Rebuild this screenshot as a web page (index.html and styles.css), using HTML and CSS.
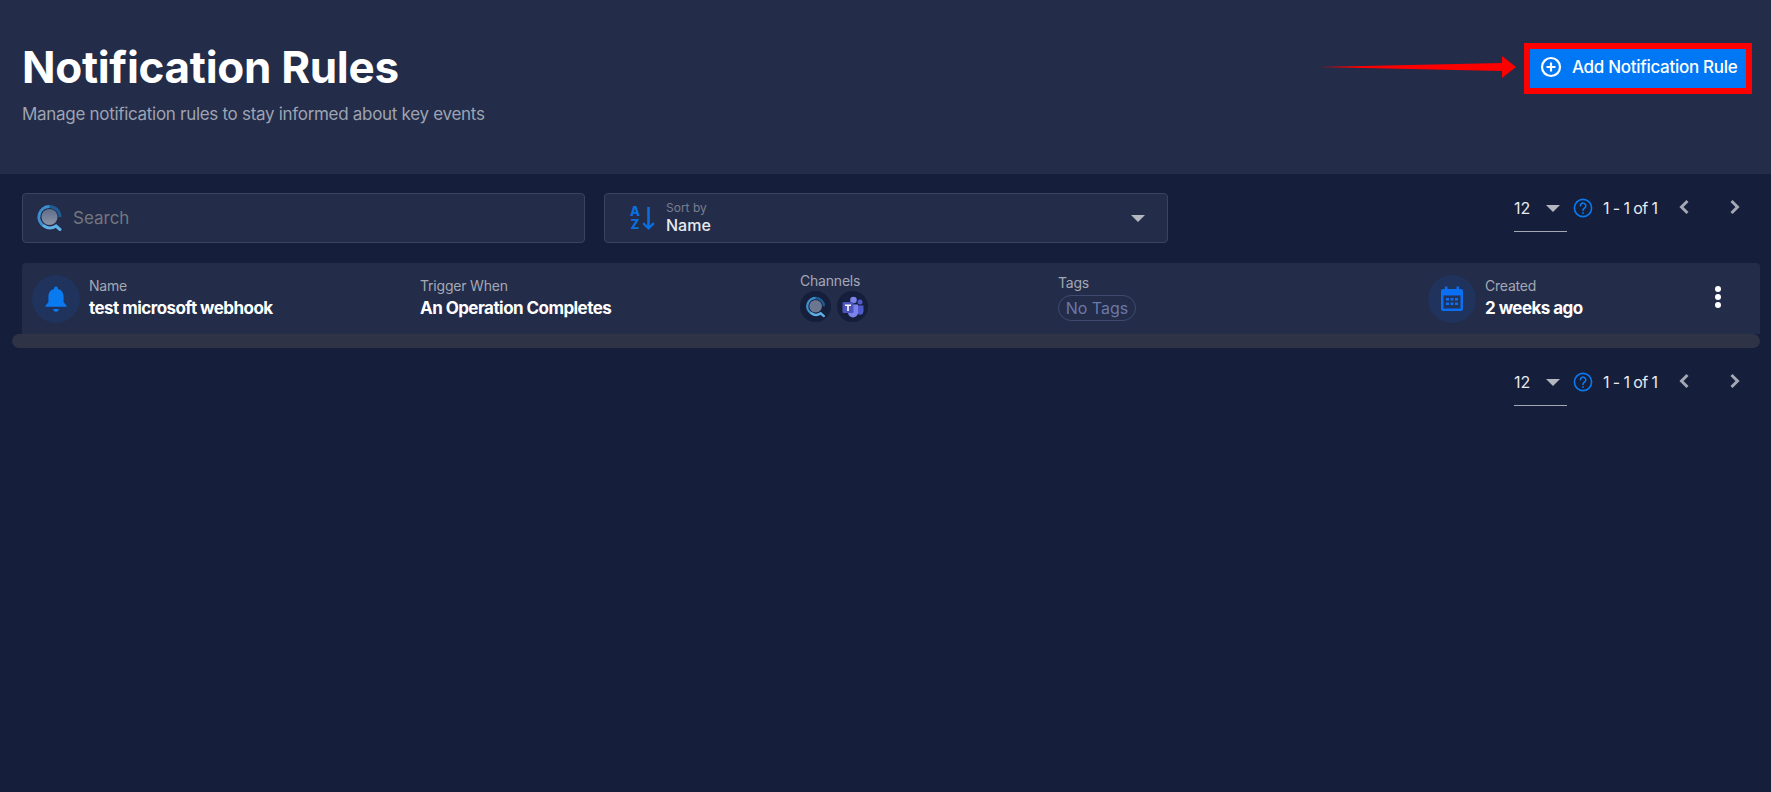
FILE: index.html
```html
<!DOCTYPE html>
<html lang="en">
<head>
    <meta charset="UTF-8">
    <meta name="viewport" content="width=device-width, initial-scale=1.0">
    <title>Notification Rules</title>
    <link rel="stylesheet" href="styles.css">
</head>
<body>
    <header class="page-header">
        <div class="page-heading">
            <h1>Notification Rules</h1>
            <p>Manage notification rules to stay informed about key events</p>
        </div>
        <div class="add-wrap">
            <svg class="red-arrow" width="200" height="26" viewBox="0 0 200 26">
                <path d="M0 13 L184 9 L184 2 L198 13 L184 24 L184 17 Z" fill="#ff0000"/>
            </svg>
            <button class="add-btn" type="button">
                <svg width="22" height="22" viewBox="0 0 22 22" fill="none" stroke="#fff" stroke-width="2.2">
                    <circle cx="11" cy="11" r="9"/>
                    <path d="M11 6.5v9M6.5 11h9"/>
                </svg>
                Add Notification Rule
            </button>
        </div>
    </header>

    <main class="content">
        <div class="toolbar">
            <div class="field search-field">
                <svg width="28" height="28" viewBox="0 0 28 28" fill="none">
                    <defs>
                        <linearGradient id="lens" x1="0" y1="0" x2="0" y2="1">
                            <stop offset="0" stop-color="#5f6d8a"/>
                            <stop offset="1" stop-color="#8b93a6"/>
                        </linearGradient>
                    </defs>
                    <circle cx="13.5" cy="13" r="8" fill="url(#lens)"/>
                    <path d="M24 13A10.5 10.5 0 0 0 13.5 2.5" stroke="#1f5c94" stroke-width="3"/>
                    <path d="M13.5 2.5A10.5 10.5 0 0 0 8 22" stroke="#3f8fce" stroke-width="3"/>
                    <path d="M8 22A10.5 10.5 0 0 0 20 22L24 25.5" stroke="#5fb0e6" stroke-width="3" stroke-linecap="round"/>
                </svg>
                <span class="placeholder">Search</span>
            </div>
            <div class="field sort-field">
                <div class="sort-icon">
                    <div class="sort-letters"><span>A</span><span>Z</span></div>
                    <svg width="13" height="25" viewBox="0 0 13 25" fill="#0a6fe0">
                        <path d="M5.2 1h2.6v18.5l3.2-3.2 1.6 1.6-6.1 6.1-6.1-6.1 1.6-1.6 3.2 3.2z"/>
                    </svg>
                </div>
                <div class="sort-text">
                    <span class="sort-label">Sort by</span>
                    <span class="sort-value">Name</span>
                </div>
                <span class="caret sort-caret"></span>
            </div>
            <div class="pager">
                <div class="page-size"><span>12</span><span class="caret"></span></div>
                <svg width="20" height="20" viewBox="0 0 20 20" fill="none" stroke="#0a7af0" stroke-width="1.6">
                    <circle cx="10" cy="10" r="8.6"/>
                    <path d="M7.4 7.8a2.7 2.7 0 1 1 4.2 2.2c-1 .7-1.6 1.2-1.6 2.4" stroke-linecap="round"/>
                    <circle cx="10" cy="15" r=".6" fill="#0a7af0" stroke-width=".8"/>
                </svg>
                <span class="page-count">1 - 1 of 1</span>
                <svg class="chevron prev" width="12" height="16" viewBox="0 0 12 16" fill="none" stroke="#a4a8b4" stroke-width="3"><path d="M9.5 2L3.5 8l6 6"/></svg>
                <svg class="chevron" width="12" height="16" viewBox="0 0 12 16" fill="none" stroke="#a4a8b4" stroke-width="3"><path d="M2.5 2l6 6-6 6"/></svg>
            </div>
        </div>

        <div class="table-scroll">
            <div class="rule-row">
                <div class="cell cell-name">
                    <span class="icon-oval">
                        <svg width="24" height="28" viewBox="0 0 24 26" fill="#0a7af0">
                            <path d="M12 .5a2 2 0 0 1 2 2v.6c3.6.9 5.6 3.9 5.6 7.6v5.6l3 3.4v1H1.4v-1l3-3.4v-5.6c0-3.7 2-6.7 5.6-7.6v-.6a2 2 0 0 1 2-2z"/>
                            <path d="M9.3 23h5.4a2.7 2.7 0 0 1-5.4 0z"/>
                        </svg>
                    </span>
                    <div class="stack">
                        <span class="label">Name</span>
                        <span class="value">test microsoft webhook</span>
                    </div>
                </div>
                <div class="cell cell-trigger">
                    <div class="stack">
                        <span class="label">Trigger When</span>
                        <span class="value">An Operation Completes</span>
                    </div>
                </div>
                <div class="cell cell-channels">
                    <div class="stack stack-tight">
                        <span class="label">Channels</span>
                        <div class="channels">
                            <span class="channel">
                                <svg width="22" height="22" viewBox="0 0 28 28" fill="none">
                                    <circle cx="13.5" cy="13" r="8" fill="#6b7690"/>
                                    <path d="M24 13A10.5 10.5 0 0 0 13.5 2.5" stroke="#1f5c94" stroke-width="3"/>
                                    <path d="M13.5 2.5A10.5 10.5 0 0 0 8 22" stroke="#3f8fce" stroke-width="3"/>
                                    <path d="M8 22A10.5 10.5 0 0 0 20 22L24 25.5" stroke="#5fb0e6" stroke-width="3" stroke-linecap="round"/>
                                </svg>
                            </span>
                            <span class="channel">
                                <svg width="24" height="24" viewBox="0 0 24 24">
                                    <circle cx="19" cy="7" r="2.5" fill="#5059c9"/>
                                    <path d="M16 10.5h6.5v6a3.5 3.5 0 0 1-6.5 1.5z" fill="#5059c9"/>
                                    <circle cx="12.5" cy="5" r="3.3" fill="#7b83eb"/>
                                    <path d="M7 9.5h10v8a5 5 0 0 1-10 0z" fill="#7b83eb"/>
                                    <rect x="1.5" y="7" width="11" height="11" rx="1.2" fill="#4b53bc"/>
                                    <path d="M4 9.5h6V11H7.8v5H6.2v-5H4z" fill="#fff"/>
                                </svg>
                            </span>
                        </div>
                    </div>
                </div>
                <div class="cell cell-tags">
                    <div class="stack stack-tags">
                        <span class="label">Tags</span>
                        <span class="tag-pill">No Tags</span>
                    </div>
                </div>
                <div class="cell cell-created">
                    <span class="icon-circle">
                        <svg width="24" height="26" viewBox="0 0 24 26" fill="#0a6ff0">
                            <path fill-rule="evenodd" d="M5 .5h2.500V3h9V.5H19V3h2a2 2 0 0 1 2 2v18a2 2 0 0 1-2 2H3a2 2 0 0 1-2-2V5a2 2 0 0 1 2-2h2zM3.500 9.500V22.500h17V9.500z"/>
                            <path d="M6 12h3v2.500H6zM10.500 12h3v2.500h-3zM15 12h3v2.500h-3zM6 16.500h3V19H6zM10.500 16.500h3V19h-3zM15 16.500h3V19h-3z"/>
                        </svg>
                    </span>
                    <div class="stack">
                        <span class="label">Created</span>
                        <span class="value">2 weeks ago</span>
                    </div>
                </div>
                <div class="kebab"><i></i><i></i><i></i></div>
            </div>
            <div class="scrollbar"></div>
        </div>

        <div class="pager pager-bottom">
            <div class="page-size"><span>12</span><span class="caret"></span></div>
            <svg width="20" height="20" viewBox="0 0 20 20" fill="none" stroke="#0a7af0" stroke-width="1.6">
                <circle cx="10" cy="10" r="8.6"/>
                <path d="M7.4 7.8a2.7 2.7 0 1 1 4.2 2.2c-1 .7-1.6 1.2-1.6 2.4" stroke-linecap="round"/>
                <circle cx="10" cy="15" r=".6" fill="#0a7af0" stroke-width=".8"/>
            </svg>
            <span class="page-count">1 - 1 of 1</span>
            <svg class="chevron prev" width="12" height="16" viewBox="0 0 12 16" fill="none" stroke="#a4a8b4" stroke-width="3"><path d="M9.5 2L3.5 8l6 6"/></svg>
            <svg class="chevron" width="12" height="16" viewBox="0 0 12 16" fill="none" stroke="#a4a8b4" stroke-width="3"><path d="M2.5 2l6 6-6 6"/></svg>
        </div>
    </main>
</body>
</html>
```

FILE: styles.css
```css
* {
    box-sizing: border-box;
}

html, body {
    margin: 0;
    padding: 0;
}

body {
    min-height: 792px;
    background-color: #151e3a;
    color: #fff;
    font-family: 'Inter', 'Noto Sans', sans-serif;
    overflow: hidden;
}

.page-header {
    height: 174px;
    padding: 42px 19px 0 22px;
    background-color: #232c49;
    display: flex;
    justify-content: space-between;
    align-items: flex-start;
}

.page-heading h1 {
    margin: 0;
    font-size: 44px;
    line-height: 50px;
    font-weight: 700;
    letter-spacing: -0.3px;
}

.page-heading p {
    margin: 11px 0 0;
    font-size: 17px;
    line-height: 22px;
    color: #9ea3b2;
    letter-spacing: -0.3px;
}

.add-wrap {
    position: relative;
    margin-top: 1px;
}

.red-arrow {
    position: absolute;
    top: 11px;
    right: 234px;
}

.add-btn {
    width: 228px;
    height: 51px;
    padding: 0 0 3px 10px;
    display: flex;
    align-items: center;
    gap: 10px;
    background-color: #0078f5;
    border: 6px solid #ff0000;
    color: #fff;
    font-family: inherit;
    font-size: 17px;
    font-weight: 500;
    letter-spacing: -0.3px;
    cursor: pointer;
}

.content {
    padding: 19px 11px 0 12px;
}

.toolbar {
    display: flex;
    align-items: flex-start;
    padding-left: 10px;
    height: 70px;
}

.field {
    height: 50px;
    display: flex;
    align-items: center;
    background-color: #232c49;
    border: 1px solid #3a4360;
    border-radius: 4px;
}

.search-field {
    width: 563px;
    margin-right: 19px;
    padding-left: 13px;
    gap: 9px;
}

.placeholder {
    font-size: 17px;
    color: #74777f;
}

.sort-field {
    width: 564px;
    padding: 0 22px 0 24px;
    gap: 11px;
}

.sort-icon {
    display: flex;
    align-items: center;
    gap: 1px;
}

.sort-letters {
    display: flex;
    flex-direction: column;
    width: 12px;
    color: #0a6fe0;
    font-size: 13px;
    line-height: 13px;
    font-weight: 800;
    text-align: center;
}

.sort-text {
    flex: 1;
    display: flex;
    flex-direction: column;
    margin-top: -1px;
}

.sort-label {
    font-size: 12px;
    line-height: 15px;
    color: #7a7f8e;
}

.sort-value {
    font-size: 16px;
    line-height: 20px;
    font-weight: 500;
    color: #e8eaee;
}

.caret {
    width: 0;
    height: 0;
    border-left: 7px solid transparent;
    border-right: 7px solid transparent;
    border-top: 7px solid #b4b7c0;
}

.pager {
    margin-left: auto;
    margin-right: 19px;
    display: flex;
    align-items: center;
    height: 39px;
    padding-bottom: 9px;
    color: #e8eaee;
    font-size: 16px;
}

.page-size {
    align-self: flex-start;
    width: 53px;
    height: 39px;
    margin-right: 6px;
    padding: 0 7px 8px 0;
    display: flex;
    align-items: center;
    justify-content: space-between;
    border-bottom: 1px solid #a4a8b4;
}

.page-count {
    margin-left: 10px;
    width: 57px;
    white-space: nowrap;
    letter-spacing: -0.6px;
}

.chevron {
    margin-left: 18px;
    margin-bottom: 3px;
}

.chevron.prev {
    margin-left: 18px;
    margin-right: 21px;
}

.rule-row {
    margin-left: 10px;
    height: 71px;
    display: flex;
    align-items: center;
    background-color: #232c49;
    border-radius: 4px 4px 0 0;
    padding-left: 10px;
}

.cell {
    display: flex;
    align-items: center;
    height: 100%;
}

.cell-name { width: 388px; }
.cell-trigger { width: 380px; }
.cell-channels { width: 258px; }
.cell-tags { width: 370px; }
.cell-created { width: 287px; }

.icon-oval,
.icon-circle {
    width: 48px;
    height: 48px;
    margin-right: 9px;
    border-radius: 50%;
    background-color: #20335c;
    display: flex;
    align-items: center;
    justify-content: center;
}

.stack {
    display: flex;
    flex-direction: column;
    gap: 3px;
    margin-top: -2px;
}

.stack-tight {
    gap: 1px;
    margin-top: -4px;
}

.stack-tags {
    gap: 3px;
    margin-top: -3px;
}

.label {
    font-size: 14px;
    line-height: 19px;
    color: #a4a8b4;
    letter-spacing: -0.2px;
}

.value {
    font-size: 17px;
    line-height: 21px;
    font-weight: 700;
    color: #fff;
    letter-spacing: -0.55px;
}

.channels {
    display: flex;
    gap: 6px;
}

.channel {
    width: 31px;
    height: 31px;
    border-radius: 50%;
    background-color: #151e3a;
    display: flex;
    align-items: center;
    justify-content: center;
}

.tag-pill {
    width: 78px;
    height: 26px;
    border: 1px solid #3e4a70;
    border-radius: 13px;
    font-size: 16px;
    line-height: 24px;
    text-align: center;
    color: #6b78a8;
}

.kebab {
    display: flex;
    flex-direction: column;
    gap: 2px;
    margin-top: -4px;
}

.kebab i {
    width: 6px;
    height: 6px;
    border-radius: 50%;
    background-color: #fff;
}

.scrollbar {
    height: 14px;
    background-color: #2e3346;
    border-radius: 7px;
}

.pager-bottom {
    justify-content: flex-end;
    margin-top: 19px;
}
```
